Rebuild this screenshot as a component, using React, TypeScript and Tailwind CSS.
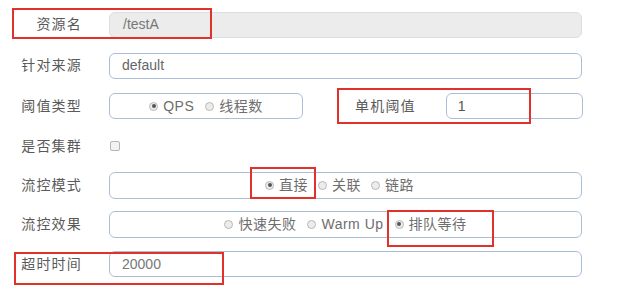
import React from "react";

const font = { fontFamily: '"Liberation Sans", "Noto Sans CJK SC", sans-serif' };

function Radio({ checked, label }: { checked?: boolean; label: string }) {
  return (
    <span className="flex items-center gap-[5px] text-[14px] text-[#6e6e6e]">
      <span className="flex h-[9px] w-[9px] items-center justify-center rounded-full border border-[#b8b8b8] bg-[#ececec]">
        {checked && <span className="h-[4px] w-[4px] rounded-full bg-[#555]" />}
      </span>
      <span className="tracking-[0.5px]">{label}</span>
    </span>
  );
}

function Label({ children }: { children: React.ReactNode }) {
  return (
    <div className="w-[82px] shrink-0 text-right text-[14px] tracking-[1.2px] text-[#5a5a5a]">
      {children}
    </div>
  );
}

function RedBox({ className }: { className: string }) {
  return <div className={"pointer-events-none absolute border-2 border-[#e2302a] " + className} />;
}

export default function App() {
  return (
    <div className="flex h-[294px] w-[621px] flex-col overflow-hidden bg-white pt-[4px]" style={font}>
      {/* 资源名 */}
      <div className="relative flex h-[41px] shrink-0 items-center">
        <Label>资源名</Label>
        <div className="ml-[27px] flex h-[26px] w-[473px] items-center rounded-[6px] border border-[#dedede] bg-[#ececec] pl-[13px] text-[14px] text-[#777]">
          /testA
        </div>
        <RedBox className="left-[12px] top-[4px] h-[31px] w-[200px]" />
      </div>

      {/* 针对来源 */}
      <div className="relative flex h-[41px] shrink-0 items-center">
        <Label>针对来源</Label>
        <div className="ml-[27px] flex h-[26px] w-[473px] items-center rounded-[6px] border-[1.5px] border-[#a9bfd9] pl-[12px] text-[14px] text-[#666]">
          default
        </div>
      </div>

      {/* 阈值类型 */}
      <div className="relative flex h-[40px] shrink-0 items-center">
        <Label>阈值类型</Label>
        <div className="ml-[27px] flex h-[26px] w-[194px] items-center justify-center gap-[11px] rounded-[6px] border-[1.5px] border-[#a9bfd9]">
          <Radio checked label="QPS" />
          <Radio label="线程数" />
        </div>
        <div className="ml-[52px] text-[14px] tracking-[1.2px] text-[#5a5a5a]">单机阈值</div>
        <div className="ml-[30px] flex h-[26px] w-[137px] items-center rounded-[6px] border-[1.5px] border-[#a9bfd9] pl-[11px] text-[14px] text-[#555]">
          1
        </div>
        <RedBox className="left-[337px] top-[2px] h-[36px] w-[194px]" />
      </div>

      {/* 是否集群 */}
      <div className="relative flex h-[40px] shrink-0 items-center">
        <Label>是否集群</Label>
        <div className="ml-[28px] h-[10px] w-[10px] rounded-[2px] border border-[#b5b5b5] bg-[#f2f2f2]" />
      </div>

      {/* 流控模式 */}
      <div className="relative flex h-[38px] shrink-0 items-center">
        <Label>流控模式</Label>
        <div className="ml-[27px] flex h-[27px] w-[473px] items-center justify-center gap-[10px] rounded-[6px] border-[1.5px] border-[#a9bfd9] pr-[12px]">
          <Radio checked label="直接" />
          <Radio label="关联" />
          <Radio label="链路" />
        </div>
        <RedBox className="left-[250px] top-[1px] h-[32px] w-[66px]" />
      </div>

      {/* 流控效果 */}
      <div className="relative flex h-[40px] shrink-0 items-center">
        <Label>流控效果</Label>
        <div className="ml-[27px] flex h-[27px] w-[473px] items-center justify-center gap-[11px] rounded-[6px] border-[1.5px] border-[#a9bfd9]">
          <Radio label="快速失败" />
          <Radio label="Warm Up" />
          <Radio checked label="排队等待" />
        </div>
        <RedBox className="left-[387px] top-[6px] h-[37px] w-[107px]" />
      </div>

      {/* 超时时间 */}
      <div className="relative flex h-[40px] shrink-0 items-center">
        <Label>超时时间</Label>
        <div className="ml-[27px] flex h-[26px] w-[473px] items-center rounded-[6px] border-[1.5px] border-[#a9bfd9] pl-[12px] text-[14px] text-[#777]">
          20000
        </div>
        <RedBox className="left-[14px] top-[8px] h-[33px] w-[210px]" />
      </div>
    </div>
  );
}
